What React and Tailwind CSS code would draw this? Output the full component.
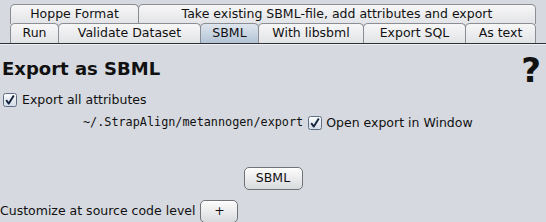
import React from "react";

const topTabs = [
  { label: "Hoppe Format", w: "w-[129px]" },
  { label: "Take existing SBML-file, add attributes and export", w: "w-[398px]" },
];

const mainTabs = [
  { label: "Run", w: "w-[49px]" },
  { label: "Validate Dataset", w: "w-[143px]" },
  { label: "SBML", w: "w-[59px]", active: true },
  { label: "With libsbml", w: "w-[106px]" },
  { label: "Export SQL", w: "w-[103px]" },
  { label: "As text", w: "w-[71px]" },
];

function Tab({ label, w, active, first, h }) {
  return (
    <div
      className={`${w} ${h} ${first ? "" : "-ml-px"} shrink-0 flex items-center justify-center rounded-t-[5px] border border-b-0 border-[#8a8d93] text-[12.5px] leading-none text-[#111] ${
        active
          ? "bg-gradient-to-b from-[#dfe6ee] to-[#b3c3d5]"
          : "bg-gradient-to-b from-[#f7f7f8] to-[#e2e3e6]"
      }`}
    >
      {label}
    </div>
  );
}

function CheckBox() {
  return (
    <svg width="14" height="14" viewBox="0 0 14 14" className="shrink-0">
      <defs>
        <linearGradient id="cbg" x1="0" y1="0" x2="0" y2="1">
          <stop offset="0" stopColor="#fbfcfd" />
          <stop offset="1" stopColor="#d4dbe5" />
        </linearGradient>
      </defs>
      <rect x="0.5" y="0.5" width="13" height="13" rx="2" fill="url(#cbg)" stroke="#5e6e84" />
      <path d="M3.2 7.2 L5.8 10.6 L10.8 2.6" fill="none" stroke="#14233f" strokeWidth="1.9" strokeLinejoin="round" />
    </svg>
  );
}

function Button({ children, w }) {
  return (
    <div
      className={`${w} h-[23px] shrink-0 flex items-center justify-center rounded-[5px] border border-[#6f7276] bg-gradient-to-b from-[#fdfdfd] to-[#d9dadd] text-[12.5px] leading-none text-[#111] shadow-[inset_0_1px_0_#ffffff]`}
    >
      {children}
    </div>
  );
}

export default function App() {
  return (
    <div className="w-[546px] h-[222px] overflow-hidden bg-[#d6d9df] font-['DejaVu_Sans',sans-serif] text-[#111]">
      {/* tab strip */}
      <div className="pt-[4px] pl-[10px]">
        <div className="flex h-[20px]">
          {topTabs.map((t, i) => (
            <Tab key={t.label} {...t} first={i === 0} h="h-[20px]" />
          ))}
        </div>
        <div className="flex h-[20px] -mt-px">
          {mainTabs.map((t, i) => (
            <Tab key={t.label} {...t} first={i === 0} h="h-[20px]" />
          ))}
        </div>
      </div>
      <div className="h-px bg-[#2e3036]" />
      <div className="h-px bg-[#eef0f3]" />

      {/* content */}
      <div className="flex justify-between items-start">
        <h1 className="mt-[13px] ml-[2px] text-[18px] leading-[22px] font-bold">Export as SBML</h1>
        <span className="mt-[8px] mr-[5px] text-[34px] leading-[34px] font-bold">?</span>
      </div>

      <div className="flex items-center gap-[5px] h-[18px] pl-[3px] mt-[4px] text-[12.5px]">
        <CheckBox />
        <span>Export all attributes</span>
      </div>

      <div className="flex items-center h-[16px] pl-[83px] mt-[6px] text-[12.5px]">
        <span className="font-['DejaVu_Sans_Mono',monospace] text-[11.8px]">~/.StrapAlign/metannogen/export</span>
        <span className="ml-[5px] mr-[4px]">
          <CheckBox />
        </span>
        <span>Open export in Window</span>
      </div>

      <div className="flex justify-center mt-[36px]">
        <Button w="w-[59px]">SBML</Button>
      </div>

      <div className="flex items-center gap-[5px] mt-[10px] text-[12.5px]">
        <span>Customize at source code level</span>
        <Button w="w-[38px]">+</Button>
      </div>
    </div>
  );
}
